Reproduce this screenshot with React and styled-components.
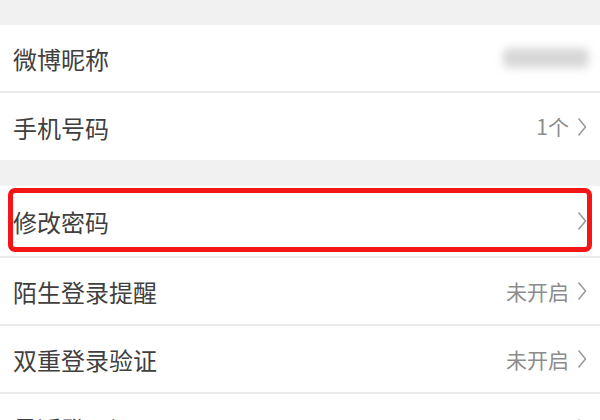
import React from 'react';
import styled, { createGlobalStyle } from 'styled-components';

const GlobalStyle = createGlobalStyle`
  html, body {
    margin: 0;
    padding: 0;
    background: #f1f1f1;
  }
  body {
    font-family: "Noto Sans CJK SC", "Noto Sans", sans-serif;
  }
`;

const groups = [
  [
    { id: 'nick', label: '微博昵称', blurred: true },
    { id: 'phone', label: '手机号码', value: '1个', arrow: true },
  ],
  [
    { id: 'pwd', label: '修改密码', arrow: true, marked: true },
    { id: 'stranger', label: '陌生登录提醒', value: '未开启', arrow: true },
    { id: 'double', label: '双重登录验证', value: '未开启', arrow: true },
    { id: 'recent', label: '最近登录记录', arrow: true },
  ],
];

const Chevron = () => (
  <svg width="10" height="20" viewBox="0 0 10 20" fill="none">
    <path d="M1.5 1.5 L8.5 10 L1.5 18.5" stroke="#9a9a9a" strokeWidth="1.5" strokeLinejoin="round" />
  </svg>
);

const App = () => (
  <Page>
    <GlobalStyle />
    {groups.map((group, gi) => (
      <Group key={gi}>
        {group.map((row) => (
          <Row key={row.id} $marked={row.marked}>
            <Label>{row.label}</Label>
            <Right>
              {row.blurred && <Blur />}
              {row.value && <Value>{row.value}</Value>}
              {row.arrow && <Chevron />}
            </Right>
          </Row>
        ))}
      </Group>
    ))}
  </Page>
);

const Page = styled.div`
  width: 600px;
  height: 420px;
  overflow: hidden;
  padding-top: 25px;
  box-sizing: border-box;
  background: #f1f1f1;
  display: flex;
  flex-direction: column;
  gap: 26px;
`;

const Group = styled.div`
  background: #fff;
  display: flex;
  flex-direction: column;
`;

const Row = styled.div`
  position: relative;
  height: 66px;
  padding: 0 13px;
  display: flex;
  align-items: center;
  justify-content: space-between;
  border-bottom: 2px solid #ebebeb;

  &:last-child {
    border-bottom: none;
    height: 67px;
  }

  ${({ $marked }) =>
    $marked &&
    `
    height: 70px;
    &::after {
      content: '';
      position: absolute;
      left: 8px;
      right: 8px;
      top: 2px;
      bottom: 4px;
      border: 5px solid #f41616;
      border-radius: 7px;
      pointer-events: none;
    }
  `}
`;

const Label = styled.span`
  font-size: 24px;
  color: #404040;
  line-height: 1;
  padding-top: 2px;
`;

const Right = styled.div`
  display: flex;
  align-items: center;
  gap: 8px;
`;

const Value = styled.span`
  font-size: 21px;
  color: #8c8c8c;
  line-height: 1;
`;

const Blur = styled.div`
  width: 86px;
  height: 20px;
  margin-right: -2px;
  border-radius: 6px;
  background: #d8d8d8;
  filter: blur(4px);
`;

export default App;
